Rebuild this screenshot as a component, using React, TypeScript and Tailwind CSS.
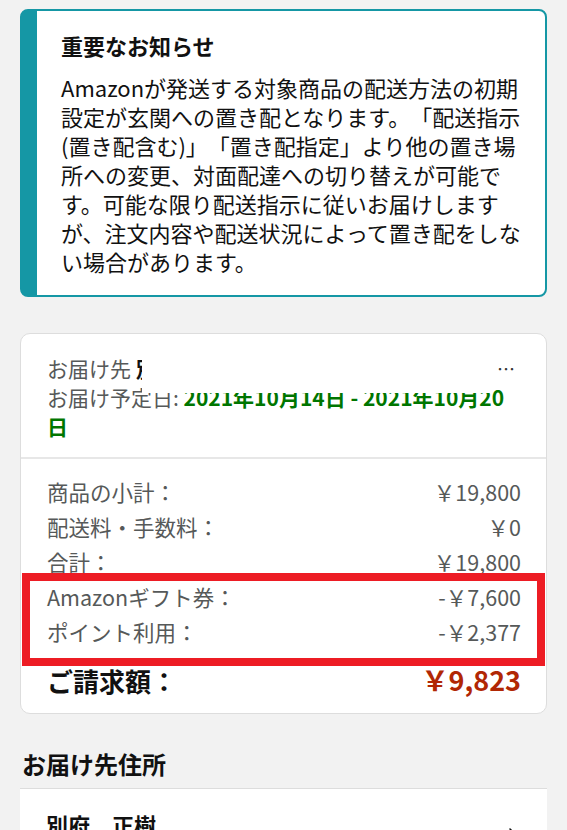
import React from 'react';
import { ChevronRight } from 'lucide-react';

const noticeLines = [
  'Amazonが発送する対象商品の配送方法の初期',
  '設定が玄関への置き配となります。「配送指示',
  '(置き配含む)」「置き配指定」より他の置き場',
  '所への変更、対面配達への切り替えが可能で',
  'す。可能な限り配送指示に従いお届けします',
  'が、注文内容や配送状況によって置き配をしな',
  'い場合があります。',
];

const PriceRow = ({ label, value }: { label: string; value: string }) => (
  <div className="flex items-center justify-between h-[35px]">
    <span>{label}</span>
    <span>{value}</span>
  </div>
);

export default function App() {
  return (
    <div
      className="min-h-screen bg-[#f2f2f2] px-5 pt-[9px] overflow-hidden [text-spacing-trim:space-all]"
      style={{ fontFamily: '"Noto Sans CJK JP", "Noto Sans", sans-serif' }}
    >
      {/* Notice */}
      <div className="bg-white border-2 border-[#1597a5] border-l-[17px] rounded-lg pl-[24px] pr-2 pt-5 pb-[19px]">
        <h2 className="text-[22px] leading-[29px] font-bold text-[#111]">重要なお知らせ</h2>
        <div className="mt-[13px] text-[22px] leading-[29px] text-[#111]">
          {noticeLines.map((line) => (
            <div key={line} className="whitespace-nowrap">{line}</div>
          ))}
        </div>
      </div>

      {/* Order summary */}
      <div className="relative mt-[36px] bg-white border border-[#dddddd] rounded-[10px]">
        <div className="relative pl-[26px] pr-[30px] pt-[20px] pb-[16px] text-[21px] leading-[29px] text-[#565959]">
          <div className="flex items-center justify-between">
            <span>
              お届け先 <span className="text-[#111] font-bold">別府 正樹</span>
            </span>
            <span className="text-[#333] text-[18px] tracking-[1px]">…</span>
          </div>
          <div>
            お届け予定日: <span className="font-bold text-[#007600]">2021年10月14日 - 2021年10月20<br />日</span>
          </div>
          {/* blanked name */}
          <div className="absolute top-[16px] left-[121px] w-[350px] h-[43px] bg-white" />
        </div>

        <div className="border-t-2 border-[#e7e7e7]" />

        <div className="pl-[26px] pr-[25px] pt-[16px] pb-[15px] text-[21.5px] text-[#565959]">
          <PriceRow label="商品の小計：" value="￥19,800" />
          <PriceRow label="配送料・手数料：" value="￥0" />
          <PriceRow label="合計：" value="￥19,800" />
          <div className="relative">
            <PriceRow label="Amazonギフト券：" value="-￥7,600" />
            <PriceRow label="ポイント利用：" value="-￥2,377" />
            <div className="absolute -top-[7px] -bottom-[16px] -left-[25px] -right-[24px] border-8 border-[#ed1c24]" />
          </div>
          <div className="flex items-center justify-between h-[36px] mt-[12px] font-bold">
            <span className="text-[26px] text-[#111]">ご請求額：</span>
            <span className="text-[27px] text-[#b12704]">￥9,823</span>
          </div>
        </div>
      </div>

      {/* Address */}
      <h3 className="mt-[34px] pl-[2px] text-[24px] leading-[32px] font-bold text-[#111]">お届け先住所</h3>
      <div className="mt-[8px] bg-white border-t border-[#dddddd] pl-[26px] pr-[22px] pt-[20px] pb-6 flex items-start justify-between">
        <span className="text-[22px] leading-[30px] font-bold text-[#111]">別府　正樹</span>
        <ChevronRight size={24} strokeWidth={1.6} className="text-[#111] mt-[14px]" />
      </div>
    </div>
  );
}
